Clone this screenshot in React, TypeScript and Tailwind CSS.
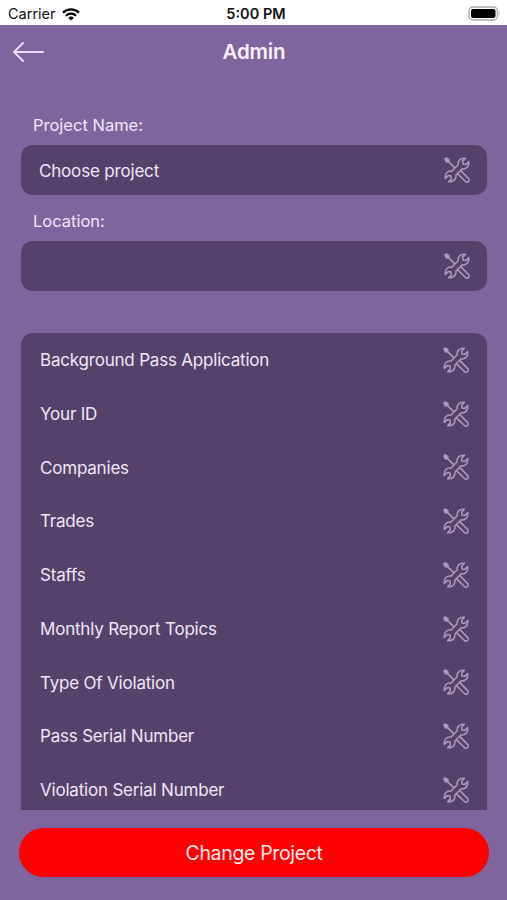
import { clsx } from "clsx";

const settings = [
  "Background Pass Application",
  "Your ID",
  "Companies",
  "Trades",
  "Staffs",
  "Monthly Report Topics",
  "Type Of Violation",
  "Pass Serial Number",
  "Violation Serial Number",
];

function ToolsIcon({ className }: { className?: string }) {
  return (
    <svg
      viewBox="0 0 26 26"
      className={clsx("size-[26px] shrink-0 text-[#ad9abc]", className)}
      fill="none"
      stroke="currentColor"
      strokeWidth="1.5"
      strokeLinejoin="round"
      strokeLinecap="round"
    >
      {/* screwdriver */}
      <path d="M0.9 2.2 2.2 0.9 4.7 2.3 5 3.7 3.7 5 2.3 4.7Z" fill="currentColor" />
      <path d="M4.6 4.6 10.4 10.4" />
      <path d="M13.4 16.6 21.4 24.5A2.1 2.1 0 0 0 24.5 21.4L16.6 13.4" />
      {/* wrench */}
      <path d="M7.8 14.2 14.2 7.8C13.4 4 16.6 .6 21.4 1.3L18.6 4.2 19 7 21.8 7.4 24.7 4.6C25.4 9.4 22 12.6 18.2 11.8L11.8 18.2C12.6 22 9.4 25.4 4.6 24.7L7.4 21.8 7 19 4.2 18.6 1.3 21.4C.6 16.6 4 13.4 7.8 14.2Z" />
    </svg>
  );
}

function StatusBar() {
  return (
    <div className="relative flex h-[25px] shrink-0 items-center justify-between bg-white pr-[6px] pl-2 text-[#111]">
      <div className="flex items-center gap-[6px] pt-[3px]">
        <span className="text-[14.5px] leading-none">Carrier</span>
        <svg viewBox="0 0 18 13" className="h-[13px] w-[18px]" fill="none" stroke="black" strokeWidth="2.3">
          <path d="M1 4.6A11.5 11.5 0 0 1 17 4.6M3.9 7.7A7.3 7.3 0 0 1 14.1 7.7" />
          <path d="M9 12.6 6.2 9.9A4 4 0 0 1 11.8 9.9Z" fill="black" stroke="none" />
        </svg>
      </div>
      <span className="absolute inset-x-0 top-[6px] pl-[5px] text-center text-[14.5px] leading-[16px] font-semibold">
        5:00 PM
      </span>
      <svg viewBox="0 0 33 15" className="mt-px h-[15px] w-[33px]">
        <rect x="1" y="1" width="28.5" height="13" rx="4" fill="white" stroke="#aaa" strokeWidth="1.3" />
        <rect x="3" y="3" width="24.5" height="9" rx="2" fill="black" />
        <path d="M31 5.3Q32.6 7.5 31 9.7Z" fill="#999" />
      </svg>
    </div>
  );
}

function SelectField({ label, value }: { label: string; value?: string }) {
  return (
    <div>
      <div className="pl-3 text-[16.5px] leading-5 text-[#f0e6f6]">{label}</div>
      <button className="mt-[10px] flex h-[50px] w-full items-center justify-between rounded-xl bg-[#54426a] pr-[17px] pl-[18px] text-[17px] tracking-[-0.18px] text-[#f0e6f6]">
        <span className="pt-[3px]">{value}</span>
        <ToolsIcon />
      </button>
    </div>
  );
}

export default function App() {
  return (
    <div className="flex h-[900px] w-[507px] flex-col overflow-hidden bg-[#7f659e] font-['Inter','Liberation_Sans',sans-serif]">
      <StatusBar />

      <header className="grid h-[54px] shrink-0 grid-cols-[1fr_auto_1fr] items-center px-[13px]">
        <svg viewBox="0 0 31 20" className="h-5 w-[31px]" fill="none" stroke="#eddcf7" strokeWidth="1.9" strokeLinecap="round" strokeLinejoin="round">
          <path d="M30 10H1M10 1 1 10 10 19" />
        </svg>
        <h1 className="pl-px text-[20.5px] font-semibold tracking-[-0.2px] text-[#f6effb]">Admin</h1>
      </header>

      <main className="flex min-h-0 flex-1 flex-col pt-[36px] pr-[20px] pl-[21px]">
        <div className="flex flex-col gap-4">
          <SelectField label="Project Name:" value="Choose project" />
          <SelectField label="Location:" />
        </div>

        <ul className="mt-[42px] h-[477px] shrink-0 overflow-hidden rounded-t-xl bg-[#54426a]">
          {settings.map((name) => (
            <li key={name} className="flex h-[53.75px] items-center justify-between pr-[18px] pl-[19px] text-[17px] tracking-[-0.2px] text-[#f0e6f6]">
              <span className="pt-[2px]">{name}</span>
              <ToolsIcon />
            </li>
          ))}
        </ul>

        <button className="mt-[18px] -mr-[2px] -ml-[2px] h-[49px] shrink-0 rounded-full bg-[#ff0000] pt-[2px] text-[19.5px] tracking-[-0.35px] text-[#ffe9ec]">
          Change Project
        </button>
      </main>
    </div>
  );
}
